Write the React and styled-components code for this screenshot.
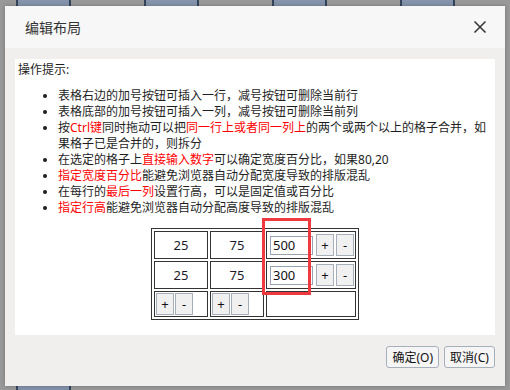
import React from 'react'
import styled, { createGlobalStyle } from 'styled-components'

const GlobalStyle = createGlobalStyle`
    html, body {
        margin: 0;
        padding: 0;
        background: #999999;
    }
    body {
        font-family: 'Noto Sans', 'Noto Sans CJK SC', sans-serif;
    }
`

const Stage = styled.div`
    position: relative;
    width: 510px;
    height: 390px;
    overflow: hidden;
    background: #999999;
`

// the desktop icons peeking out from behind the modal
const Desktop = styled.div`
    display: grid;
    grid-template-columns: repeat(4, 55px);
    grid-template-rows: 180px 40px;
    column-gap: 73px;
    row-gap: 204px;
    padding-left: 16px;
`

const Tile = styled.div`
    box-sizing: border-box;
    background: linear-gradient(180deg, #8494ab 0%, #6f809a 100%);
    border-left: 2px solid #34445e;
    border-right: 2px solid #34445e;
    grid-column: ${(p) => p.col || 'auto'};
`

const Dialog = styled.div`
    position: absolute;
    left: 5px;
    top: 6px;
    width: 500px;
    height: 380px;
    display: flex;
    flex-direction: column;
    background: #f0efed;
    box-shadow: 0 0 4px rgba(0, 0, 0, 0.25);
`

const Header = styled.div`
    height: 42px;
    display: flex;
    align-items: center;
    justify-content: space-between;
    padding: 0 18px 0 20px;
    background: #f7f7f7;
`

const Title = styled.div`
    font-size: 14px;
    color: #333;
    font-family: 'Noto Sans CJK SC', sans-serif;
`

const Close = styled.button`
    width: 14px;
    height: 14px;
    padding: 0;
    border: 0;
    background: none;
    display: flex;
    cursor: pointer;
`

const Body = styled.div`
    flex: 1;
    display: flex;
    flex-direction: column;
    padding: 11px 10px 0 10px;
`

const Panel = styled.div`
    height: 276px;
    box-sizing: border-box;
    background: #ffffff;
    padding: 3px;
    font-size: 12px;
    line-height: 16px;
    color: #1e1e1e;
`

const List = styled.ul`
    margin: 10px 0 12px 0;
    padding-left: 40px;
    li {
        line-height: 16px;
    }
`

const Red = styled.span`
    color: #ff0000;
`

const TableWrap = styled.div`
    position: relative;
    width: fit-content;
    margin: 0 auto;
`

const Grid = styled.table`
    border: 1px solid #333;
    border-spacing: 2px;
    font-size: 13px;
    color: #1a1a2a;
`

const Cell = styled.td`
    box-sizing: border-box;
    border: 1px solid #333;
    width: ${(p) => p.w}px;
    height: ${(p) => p.h || 28}px;
    padding: 0 1px;
    text-align: ${(p) => (p.left ? 'left' : 'center')};
    vertical-align: middle;
`

const CellRow = styled.div`
    display: flex;
    align-items: center;
    gap: ${(p) => p.gap || 0}px;
    padding-left: ${(p) => p.pl || 0}px;
`

const NumInput = styled.input`
    box-sizing: border-box;
    width: 43px;
    height: 19px;
    border: 1px solid #97a3b2;
    padding: 0 2px;
    font-size: 13px;
    font-family: 'Noto Sans', sans-serif;
    color: #111;
    margin-right: 1px;
`

const Mini = styled.button`
    box-sizing: border-box;
    width: 18px;
    height: 22px;
    padding: 0;
    border: 1px solid #a5aeb9;
    background: #f0f0f0;
    font-size: 13px;
    font-family: 'Noto Sans', sans-serif;
    color: #111;
    line-height: 18px;
`

const Marker = styled.div`
    position: absolute;
    left: 111px;
    top: -10px;
    width: 49px;
    height: 77px;
    box-sizing: border-box;
    border: 3px solid #ee3a3f;
    pointer-events: none;
`

const Footer = styled.div`
    display: flex;
    justify-content: flex-end;
    gap: 5px;
    padding-top: 11px;
`

const DlgButton = styled.button`
    box-sizing: border-box;
    height: 22px;
    padding: 0 5px;
    border: 1px solid #a6afba;
    border-radius: 3px;
    background: #f5f5f5;
    font-family: 'Noto Sans', 'Noto Sans CJK SC', sans-serif;
    font-size: 12px;
    color: #111;
    min-width: ${(p) => p.w}px;
`

const tips = [
    <>表格右边的加号按钮可插入一行，减号按钮可删除当前行</>,
    <>表格底部的加号按钮可插入一列，减号按钮可删除当前列</>,
    <>
        按<Red>Ctrl键</Red>同时拖动可以把<Red>同一行上或者同一列上</Red>
        的两个或两个以上的格子合并，如果格子已是合并的，则拆分
    </>,
    <>
        在选定的格子上<Red>直接输入数字</Red>可以确定宽度百分比，如果80,20
    </>,
    <>
        <Red>指定宽度百分比</Red>能避免浏览器自动分配宽度导致的排版混乱
    </>,
    <>
        在每行的<Red>最后一列</Red>设置行高，可以是固定值或百分比
    </>,
    <>
        <Red>指定行高</Red>能避免浏览器自动分配高度导致的排版混乱
    </>,
]

const rows = [
    { a: '25', b: '75', h: '500' },
    { a: '25', b: '75', h: '300' },
]

const App = () => {
    return (
        <Stage>
            <GlobalStyle />
            <Desktop>
                <Tile />
                <Tile />
                <Tile />
                <Tile />
                <Tile col="1" />
            </Desktop>
            <Dialog>
                <Header>
                    <Title>编辑布局</Title>
                    <Close>
                        <svg width="14" height="14" viewBox="0 0 14 14">
                            <path
                                d="M1.5 1.5 L12.5 12.5 M12.5 1.5 L1.5 12.5"
                                stroke="#333"
                                strokeWidth="1.5"
                                fill="none"
                            />
                        </svg>
                    </Close>
                </Header>
                <Body>
                    <Panel>
                        <div>操作提示:</div>
                        <List>
                            {tips.map((t, i) => (
                                <li key={i}>{t}</li>
                            ))}
                        </List>
                        <TableWrap>
                            <Grid>
                                <tbody>
                                    {rows.map((r, i) => (
                                        <tr key={i}>
                                            <Cell w={54}>{r.a}</Cell>
                                            <Cell w={54}>{r.b}</Cell>
                                            <Cell w={90} left>
                                                <CellRow gap={2} pl={2}>
                                                    <NumInput
                                                        defaultValue={r.h}
                                                    />
                                                    <Mini>+</Mini>
                                                    <Mini>-</Mini>
                                                </CellRow>
                                            </Cell>
                                        </tr>
                                    ))}
                                    <tr>
                                        <Cell w={54} h={26} left>
                                            <CellRow gap={1}>
                                                <Mini>+</Mini>
                                                <Mini>-</Mini>
                                            </CellRow>
                                        </Cell>
                                        <Cell w={54} h={26} left>
                                            <CellRow gap={1}>
                                                <Mini>+</Mini>
                                                <Mini>-</Mini>
                                            </CellRow>
                                        </Cell>
                                        <Cell w={90} h={26} />
                                    </tr>
                                </tbody>
                            </Grid>
                            <Marker />
                        </TableWrap>
                    </Panel>
                    <Footer>
                        <DlgButton w={52}>确定(O)</DlgButton>
                        <DlgButton w={51}>取消(C)</DlgButton>
                    </Footer>
                </Body>
            </Dialog>
        </Stage>
    )
}

export default App
